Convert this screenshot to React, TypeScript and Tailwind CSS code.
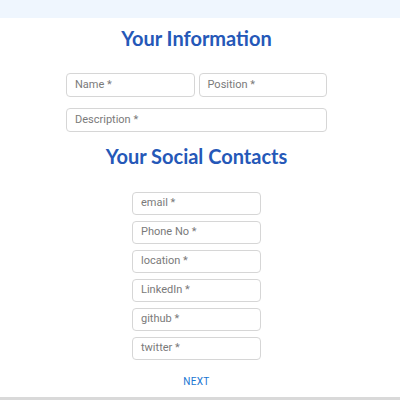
import React from "react";

function Field({ label, className }: { label: string; className: string }) {
  return (
    <div
      className={`border border-[#d6d6d6] rounded-[4px] bg-white flex items-center pl-[8px] text-[11px] text-[#7a7a7a] ${className}`}
      style={{ fontFamily: 'Roboto, "Liberation Sans", Arial, sans-serif' }}
    >
      {label} *
    </div>
  );
}

export default function App() {
  const socials = ["email", "Phone No", "location", "LinkedIn", "github", "twitter"];
  return (
    <div className="w-[400px] h-[400px] bg-white flex flex-col overflow-hidden">
      <div className="h-[18px] w-full bg-[#eff6fe]" />
      <div className="w-[393px] flex flex-col items-center flex-1">
        <h1
          className="mt-[6px] leading-[28px] text-[20px] font-bold text-[#2558b8]"
          style={{ fontFamily: 'Lato, "Noto Sans", sans-serif' }}
        >
          Your Information
        </h1>
        <div className="mt-[21px] w-[261px] flex gap-[4px]">
          <Field label="Name" className="flex-1 h-[24px]" />
          <Field label="Position" className="flex-1 h-[24px]" />
        </div>
        <Field label="Description" className="mt-[11px] w-[261px] h-[24px]" />
        <h2
          className="mt-[10px] leading-[28px] text-[20px] font-bold text-[#2558b8]"
          style={{ fontFamily: 'Lato, "Noto Sans", sans-serif' }}
        >
          Your Social Contacts
        </h2>
        <div className="mt-[22px] w-[129px] flex flex-col gap-[6px]">
          {socials.map((s) => (
            <Field key={s} label={s} className="h-[23px]" />
          ))}
        </div>
        <div
          className="mt-[15px] leading-[14px] text-[10px] text-[#1976d2] tracking-[0.3px]"
          style={{ fontFamily: 'Roboto, "Liberation Sans", Arial, sans-serif' }}
        >
          NEXT
        </div>
      </div>
      <div className="h-[3px] w-full bg-[#d9d9d9]" />
    </div>
  );
}
